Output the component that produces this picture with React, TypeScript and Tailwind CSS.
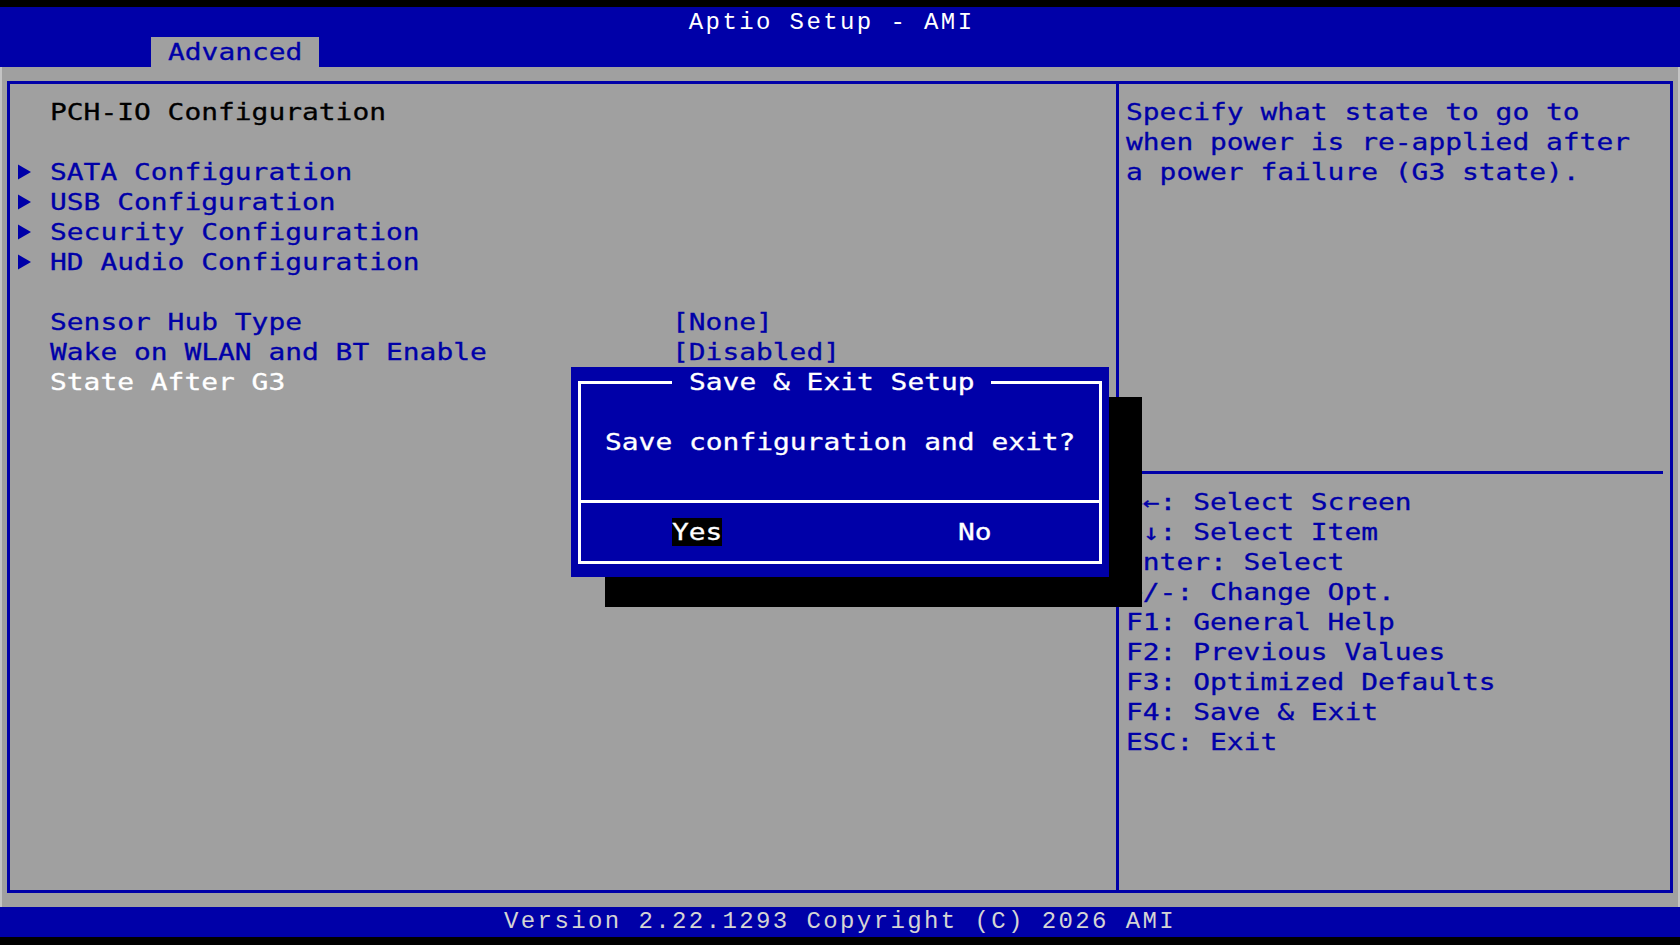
import React from "react";

function T({ children, className = "" }: { children: React.ReactNode; className?: string }) {
  return (
    <span
      className={
        "inline-block origin-left [transform:scaleX(1.2132)] whitespace-pre [-webkit-text-stroke:0.3px_currentColor] " +
        className
      }
    >
      {children}
    </span>
  );
}

function Tri() {
  return (
    <svg width="16" height="30" viewBox="0 0 16 30" className="block">
      <polygon points="1,7.5 14,15 1,22.5" fill="#0000a8" />
    </svg>
  );
}

function SubMenu({ label }: { label: string }) {
  return (
    <div className="h-[30px] flex">
      <div className="w-[33.6px] shrink-0">
        <Tri />
      </div>
      <T className="text-[#0000a8]">{label}</T>
    </div>
  );
}

function Setting({ label, value, selected = false }: { label: string; value?: string; selected?: boolean }) {
  return (
    <div className="h-[30px] flex pl-[33.6px]">
      <div className="w-[621.6px] shrink-0">
        <T className={selected ? "text-white" : "text-[#0000a8]"}>{label}</T>
      </div>
      {value ? <T className="text-[#0000a8]">{value}</T> : null}
    </div>
  );
}

function Row({ children }: { children?: React.ReactNode }) {
  return <div className="h-[30px] flex">{children}</div>;
}

export default function App() {
  const keys = [
    "\u2192\u2190: Select Screen",
    "\u2191\u2193: Select Item",
    "Enter: Select",
    "+/-: Change Opt.",
    "F1: General Help",
    "F2: Previous Values",
    "F3: Optimized Defaults",
    "F4: Save & Exit",
    "ESC: Exit",
  ];
  return (
    <div className="relative w-[1680px] h-[945px] bg-black flex flex-col overflow-hidden font-['DejaVu_Sans_Mono',monospace] text-[23px] leading-[30px]">
      <div className="h-[7px] shrink-0" />

      {/* Header */}
      <div className="h-[60px] shrink-0 bg-[#0000a8] flex flex-col">
        <div className="h-[30px] pt-[2px] pl-[688.8px] font-['Liberation_Mono',monospace] text-[24px] leading-[28px] tracking-[2.4px] text-white whitespace-pre">
          Aptio Setup - AMI
        </div>
        <div className="h-[30px] pl-[151.2px] flex">
          <div className="w-[168px] h-[30px] bg-[#a0a0a0] pl-[16.8px]">
            <T className="text-[#0000a8]">Advanced</T>
          </div>
        </div>
      </div>

      {/* Body */}
      <div className="h-[840px] shrink-0 bg-[#a0a0a0] border-x-2 border-[#c4c4c4] pt-[14px] pb-[14px] px-[5px] flex flex-col">
        <div className="flex-1 border-[3px] border-[#0000a8] flex">
          {/* Left panel */}
          <div className="w-[1109px] shrink-0 border-r-[3px] border-[#0000a8] pt-[13px] pl-[6.8px] flex flex-col">
            <Row>
              <div className="pl-[33.6px]">
                <T className="text-black">PCH-IO Configuration</T>
              </div>
            </Row>
            <Row />
            <SubMenu label="SATA Configuration" />
            <SubMenu label="USB Configuration" />
            <SubMenu label="Security Configuration" />
            <SubMenu label="HD Audio Configuration" />
            <Row />
            <Setting label="Sensor Hub Type" value="[None]" />
            <Setting label="Wake on WLAN and BT Enable" value="[Disabled]" />
            <Setting label="State After G3" selected />
          </div>

          {/* Right panel */}
          <div className="flex-1 pt-[13px] pl-[6.6px] flex flex-col">
            <Row>
              <T className="text-[#0000a8]">Specify what state to go to</T>
            </Row>
            <Row>
              <T className="text-[#0000a8]">when power is re-applied after</T>
            </Row>
            <Row>
              <T className="text-[#0000a8]">a power failure (G3 state).</T>
            </Row>
            <div className="h-[270px]" />
            <div className="h-[30px] flex items-center">
              <div className="w-[537.6px] h-[3px] bg-[#0000a8]" />
            </div>
            {keys.map((k) => (
              <Row key={k}>
                <T className="text-[#0000a8]">{k}</T>
              </Row>
            ))}
          </div>
        </div>
      </div>

      {/* Footer */}
      <div className="h-[30px] shrink-0 bg-[#0000a8] pl-[504px] font-['Liberation_Mono',monospace] text-[24px] tracking-[2.4px] text-[#d4d4d4] whitespace-pre">
        Version 2.22.1293 Copyright (C) 2026 AMI
      </div>
      <div className="flex-1" />

      {/* Dialog shadow */}
      <div className="absolute left-[604.8px] top-[397px] w-[537.6px] h-[210px] bg-black" />

      {/* Dialog */}
      <div className="absolute left-[571.2px] top-[367px] w-[537.6px] h-[210px] bg-[#0000a8] pt-[14px] pb-[13px] px-[7px] flex flex-col">
        <div className="flex-1 border-[3px] border-white flex flex-col">
          <div className="h-[116px] flex items-center pl-[23.6px]">
            <T className="text-white">Save configuration and exit?</T>
          </div>
          <div className="flex-1 border-t-[3px] border-white flex items-center pl-[90.8px]">
            <div className="w-[50.4px] h-[28px] bg-black leading-[28px]">
              <T className="text-white">Yes</T>
            </div>
            <div className="ml-[235.2px]">
              <T className="text-white">No</T>
            </div>
          </div>
        </div>
        <div className="absolute left-[100.8px] top-0 w-[319.2px] h-[30px] bg-[#0000a8] pl-[16.8px]">
          <T className="text-white">Save &amp; Exit Setup</T>
        </div>
      </div>
    </div>
  );
}
